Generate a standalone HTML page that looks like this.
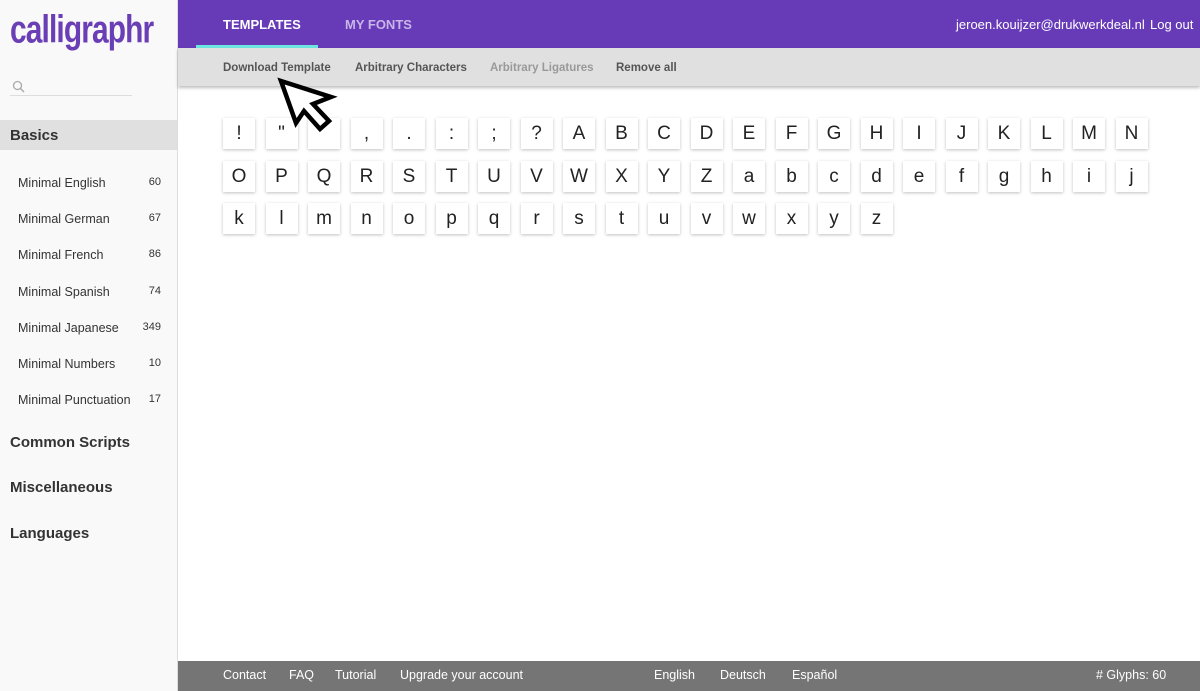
<!DOCTYPE html><html><head><style>
*{margin:0;padding:0;box-sizing:border-box}
body{width:1200px;height:691px;position:relative;overflow:hidden;font-family:"Liberation Sans",sans-serif;background:#fff}
.side{position:absolute;left:0;top:0;width:178px;height:691px;background:#f9f9f9;border-right:1px solid #ddd}
.logo{position:absolute;left:10px;top:8px;font:bold 34px "Liberation Sans",sans-serif;color:#6a3fb5;letter-spacing:-1px;transform:scale(0.88,1.15);transform-origin:left top}
.search{position:absolute;left:10px;top:80px;width:122px;border-bottom:1px solid #ddd;height:16px}
.bas{position:absolute;left:0;top:120px;width:177px;height:30px;background:#e0e0e0;font-size:15px;font-weight:bold;color:#333;padding:7px 10px}
.item{position:absolute;left:18px;width:143px;font-size:12.5px;color:#333;display:flex;justify-content:space-between}
.item span:last-child{font-size:11px}
.cat{position:absolute;left:10px;font-size:15px;font-weight:bold;color:#333}
.top{position:absolute;left:178px;top:0;right:0;height:48px;background:#673ab7;color:#fff;font-size:13px}
.top div{position:absolute;top:17px}
.sub{position:absolute;left:178px;top:48px;right:0;height:38px;background:#e0e0e0;box-shadow:0 2px 3px rgba(0,0,0,.25);font-size:11.5px;font-weight:bold;color:#555}
.sub div{position:absolute;top:14px}
.t{position:absolute;width:32px;height:31px;background:#fff;box-shadow:0 1px 3px rgba(0,0,0,.25);font-size:19px;color:#222;text-align:center;line-height:31px}
.foot{position:absolute;left:178px;top:661px;right:0;height:30px;background:#757575;color:#fff;font-size:12.5px}
.foot div{position:absolute;top:7px}
</style></head><body>
<div class="side">
<div class="logo">calligraphr</div>
<div class="search"><svg width="14" height="14" style="position:absolute;left:2px;top:0"><circle cx="5.5" cy="5.5" r="4" fill="none" stroke="#aaa" stroke-width="1.3"/><line x1="8.5" y1="8.5" x2="12" y2="12" stroke="#aaa" stroke-width="1.5"/></svg></div>
<div class="bas">Basics</div>
<div class="item" style="top:176px"><span>Minimal English</span><span>60</span></div>
<div class="item" style="top:212px"><span>Minimal German</span><span>67</span></div>
<div class="item" style="top:248px"><span>Minimal French</span><span>86</span></div>
<div class="item" style="top:285px"><span>Minimal Spanish</span><span>74</span></div>
<div class="item" style="top:321px"><span>Minimal Japanese</span><span>349</span></div>
<div class="item" style="top:357px"><span>Minimal Numbers</span><span>10</span></div>
<div class="item" style="top:393px"><span>Minimal Punctuation</span><span>17</span></div>
<div class="cat" style="top:434px">Common Scripts</div>
<div class="cat" style="top:479px">Miscellaneous</div>
<div class="cat" style="top:525px">Languages</div>
</div>
<div class="top"><div style="left:45px;font-weight:bold">TEMPLATES</div><div style="left:167px;color:#c9b5ea;font-weight:bold">MY FONTS</div>
<span style="position:absolute;left:18px;top:45px;width:122px;height:3px;background:#6ee6e0"></span>
<div style="left:778px">jeroen.kouijzer@drukwerkdeal.nl</div><div style="left:972px">Log out</div></div>
<div class="sub"><div style="left:45px">Download Template</div><div style="left:177px">Arbitrary Characters</div><div style="left:312px;color:#999">Arbitrary Ligatures</div><div style="left:438px">Remove all</div></div>
<div id="g"></div>
<svg style="position:absolute;left:276px;top:76px" width="62" height="58"><path d="M5 5 L20 47 L28 35 L44 53 L53 45 L37 28 L55 21 Z" fill="#fff" stroke="#000" stroke-width="4.5" stroke-linejoin="miter"/></svg>
<div class="foot"><div style="left:45px">Contact</div><div style="left:111px">FAQ</div><div style="left:157px">Tutorial</div><div style="left:222px">Upgrade your account</div><div style="left:476px">English</div><div style="left:542px">Deutsch</div><div style="left:614px">Español</div><div style="left:918px">#&nbsp;Glyphs: 60</div></div>
<script>
var c='!|"|#|,|.|:|;|?|A|B|C|D|E|F|G|H|I|J|K|L|M|N|O|P|Q|R|S|T|U|V|W|X|Y|Z|a|b|c|d|e|f|g|h|i|j|k|l|m|n|o|p|q|r|s|t|u|v|w|x|y|z'.split('|'),h='';
c.forEach(function(ch,i){var x=223+(i%22)*42.5,y=118+Math.floor(i/22)*42.5;if(ch=='#')ch='';h+='<div class="t" style="left:'+x+'px;top:'+y+'px">'+ch+'</div>'});
document.getElementById('g').innerHTML=h;
</script>
</body></html>
